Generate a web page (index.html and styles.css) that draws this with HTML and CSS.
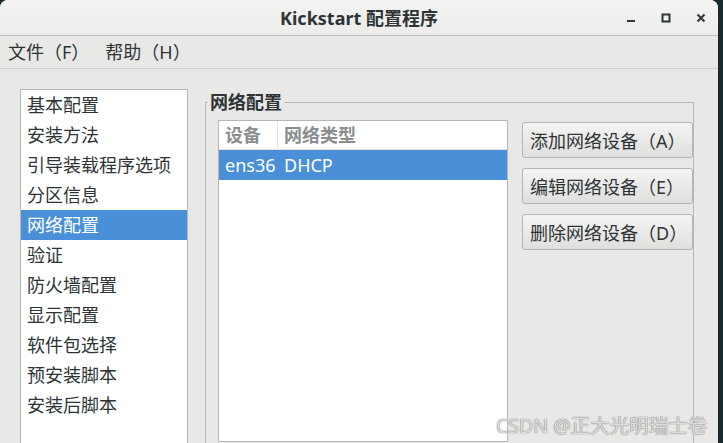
FILE: index.html
```html
<!DOCTYPE html>
<html lang="zh-CN">
<head>
  <meta charset="UTF-8" />
  <title>Kickstart 配置程序</title>
  <link rel="stylesheet" href="styles.css">
</head>
<body>
  <div class="window">
    <div class="titlebar">
      <span class="title">Kickstart 配置程序</span>
      <div class="controls">
        <svg class="ctl" width="14" height="14" viewBox="0 0 14 14"><rect x="3" y="9" width="8" height="2" fill="#2e3436"/></svg>
        <svg class="ctl" width="14" height="14" viewBox="0 0 14 14"><rect x="3.5" y="3.5" width="7" height="7" fill="none" stroke="#2e3436" stroke-width="2"/></svg>
        <svg class="ctl" width="14" height="14" viewBox="0 0 14 14"><path d="M3.5 3.5 L10.5 10.5 M10.5 3.5 L3.5 10.5" stroke="#2e3436" stroke-width="2"/></svg>
      </div>
    </div>

    <div class="menubar">
      <span class="menu-item">文件（F）</span>
      <span class="menu-item">帮助（H）</span>
    </div>

    <div class="content">
      <ul class="sidebar">
        <li>基本配置</li>
        <li>安装方法</li>
        <li>引导装载程序选项</li>
        <li>分区信息</li>
        <li class="selected">网络配置</li>
        <li>验证</li>
        <li>防火墙配置</li>
        <li>显示配置</li>
        <li>软件包选择</li>
        <li>预安装脚本</li>
        <li>安装后脚本</li>
      </ul>

      <fieldset class="frame">
        <legend>网络配置</legend>
        <div class="frame-body">
          <div class="tree">
            <div class="tree-row tree-head">
              <span class="col-dev">设备</span>
              <span class="col-type">网络类型</span>
            </div>
            <div class="tree-row selected">
              <span class="col-dev">ens36</span>
              <span class="col-type">DHCP</span>
            </div>
          </div>
          <div class="buttons">
            <button>添加网络设备（A）</button>
            <button>编辑网络设备（E）</button>
            <button>删除网络设备（D）</button>
          </div>
        </div>
      </fieldset>
    </div>

    <div class="watermark">CSDN @正大光明瑞士卷</div>
  </div>
</body>
</html>
```

FILE: styles.css
```css
body { margin: 0; background: #1a2a2c; font-family: "Noto Sans", "Noto Sans CJK SC", sans-serif; font-size: 18px; color: #2e3436; }

.window { position: relative; width: 718px; height: 443px; overflow: hidden; background: #e8e8e7; border-radius: 8px 8px 0 0; }

.titlebar { height: 35px; border-bottom: 1px solid #bfbfbc; background: linear-gradient(#f3f3f2, #ececeb); display: flex; align-items: center; justify-content: center; position: relative; }
.title { font-weight: bold; font-size: 18px; line-height: 20px; }
.controls { position: absolute; right: 10px; top: 11px; display: flex; gap: 21px; }
.ctl { display: block; }

.menubar { height: 32px; border-bottom: 1px solid #cfcfcd; display: flex; align-items: center; padding-left: 8px; gap: 16px; }
.menu-item { line-height: 20px; }

.content { display: flex; align-items: flex-start; padding-left: 20px; }

.sidebar { list-style: none; margin: 20px 0 0; padding: 0; width: 166px; height: 400px; background: #fff; border: 1px solid #b6b6b3; }
.sidebar li { height: 30px; line-height: 30px; padding-left: 6px; white-space: nowrap; }
.sidebar li.selected { background: #4a90d9; color: #fff; }

.frame { margin: 24px 0 0 17px; padding: 0; width: 487px; height: 400px; border: 1px solid #b9b9b6; border-bottom: none; min-width: 0; }
.frame legend { font-weight: bold; line-height: 18px; padding: 0 2px; margin-left: 2px; }

.frame-body { display: flex; align-items: flex-start; margin: 9px 0 0 12px; }

.tree { width: 288px; height: 320px; background: #fff; border: 1px solid #b6b6b3; }
.tree-row { display: flex; height: 30px; line-height: 30px; }
.tree-head { height: 28px; line-height: 28px; border-bottom: 1px solid #e4e4e2; color: #8b8e8f; font-weight: bold; }
.tree-row.selected { background: #4a90d9; color: #fff; }
.col-dev { width: 52px; padding-left: 6px; }
.col-type { padding-left: 6px; }
.tree-head .col-dev { border-right: 1px solid #e4e4e2; }
.tree-row.selected .col-type { padding-left: 7px; }

.buttons { display: flex; flex-direction: column; gap: 10px; margin: 2px 0 0 14px; }
.buttons button { width: 171px; height: 36px; font: inherit; color: #2e3436; text-align: left; padding: 0 0 0 7px; border: 1px solid #b3b3b0; border-radius: 3px; background: linear-gradient(#f4f4f3, #dfdfdd); }

.watermark { position: absolute; left: 496px; top: 410px; font-size: 19.5px; color: rgba(255, 255, 255, 0.75); text-shadow: 0 0 1px #777, 0 0 1px #777; white-space: nowrap; }
```
